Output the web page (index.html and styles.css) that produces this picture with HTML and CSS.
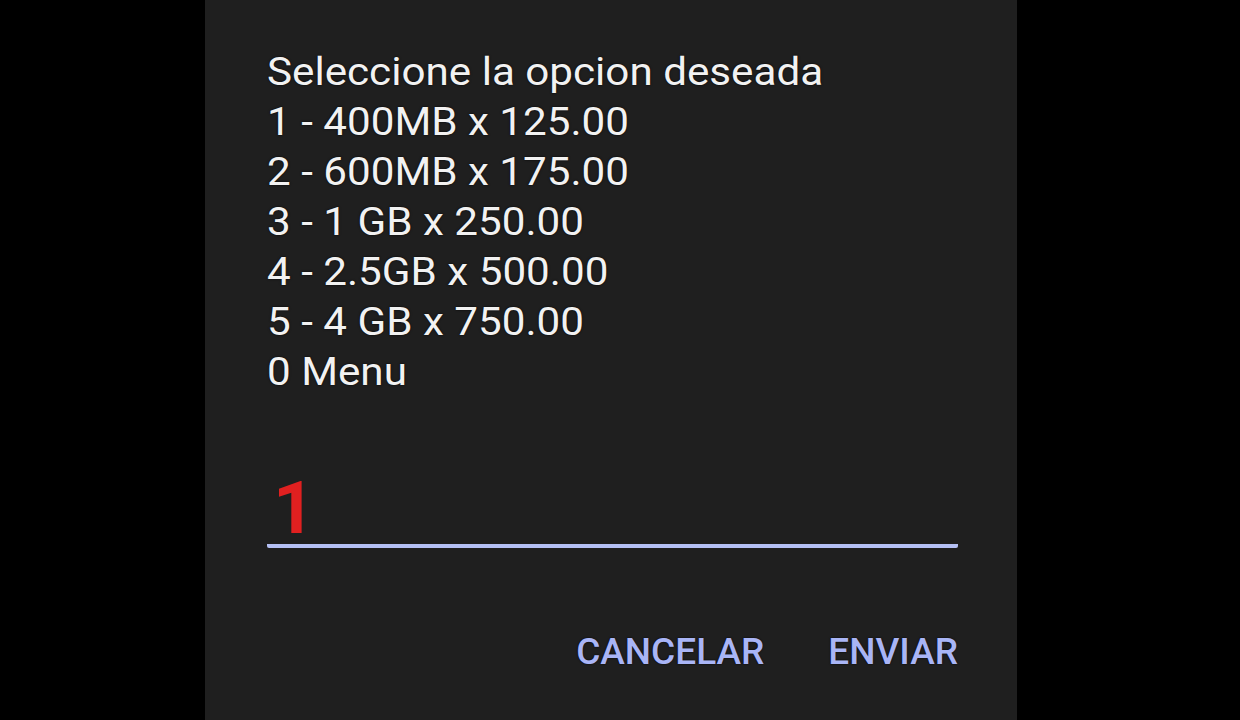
FILE: index.html
```html
<!DOCTYPE html>
<html lang="es">
<head>
<meta charset="utf-8">
<title>USSD</title>
<link rel="stylesheet" href="styles.css">
</head>
<body>
<div class="dialog">
  <div class="message">
    <div class="line">Seleccione la opcion deseada</div>
    <div class="line">1 - 400MB x 125.00</div>
    <div class="line">2 - 600MB x 175.00</div>
    <div class="line">3 - 1 GB x 250.00</div>
    <div class="line">4 - 2.5GB x 500.00</div>
    <div class="line">5 - 4 GB x 750.00</div>
    <div class="line">0 Menu</div>
  </div>
  <div class="input"><span class="value">1</span></div>
  <div class="actions">
    <span class="btn">CANCELAR</span>
    <span class="btn">ENVIAR</span>
  </div>
</div>
</body>
</html>
```
FILE: styles.css
```css
html, body {
  margin: 0;
  padding: 0;
  background: #000;
  height: 720px;
  overflow: hidden;
}
body {
  font-family: Roboto, "Noto Sans", sans-serif;
}
.dialog {
  margin-left: 205px;
  width: 812px;
  height: 720px;
  box-sizing: border-box;
  background: #1f1f1f;
  padding: 47px 59px 0 62px;
  display: flex;
  flex-direction: column;
}
.message {
  color: #f2f2f2;
  font-size: 38px;
  line-height: 50px;
  text-shadow: 0 0 2px #000;
  transform: scaleX(1.11);
  transform-origin: left top;
}
.input {
  margin-top: 76px;
  height: 71px;
  border-bottom: 4px solid #b5c0f4;
  border-radius: 2px;
}
.value {
  display: block;
  padding-left: 6px;
  font-size: 73px;
  line-height: 71px;
  font-weight: 700;
  color: #e02020;
}
.actions {
  margin-top: 79px;
  display: flex;
  justify-content: flex-end;
  gap: 64px;
}
.btn {
  font-size: 37px;
  line-height: 50px;
  font-weight: 500;
  color: #a9b5f6;
  text-shadow: 0 0 2px #000;
}
```
